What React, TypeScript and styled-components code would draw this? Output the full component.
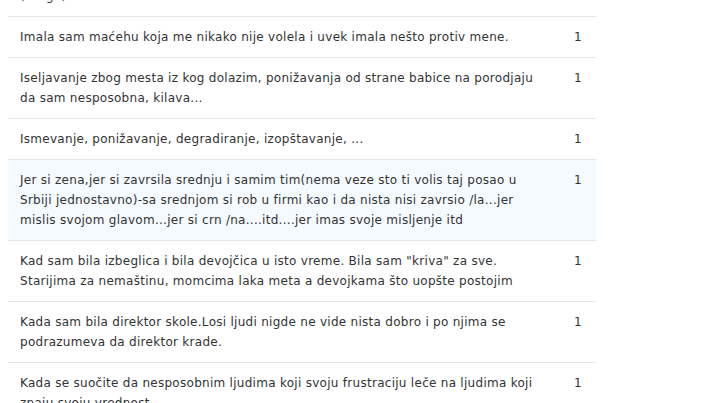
import React from "react";
import styled, { createGlobalStyle } from "styled-components";

const Global = createGlobalStyle`
  html, body { margin: 0; padding: 0; background: #ffffff; }
  body { padding: 0 8px; font-family: "DejaVu Sans", Verdana, sans-serif; overflow: hidden; }
`;

const Table = styled.table`
  width: 588px;
  margin-top: -24px;
  border-collapse: collapse;
  font-family: "DejaVu Sans", Verdana, sans-serif;
  font-size: 12px;
  letter-spacing: 0.28px;
  line-height: 20px;
  color: #333333;
`;

const Row = styled.tr<{ $hl?: boolean }>`
  background: ${(p) => (p.$hl ? "#f5fafe" : "#ffffff")};
  border-bottom: 1px solid #e6e6e1;
`;

const TextCell = styled.td`
  padding: 10px 16px 10px 12px;
  vertical-align: top;
  text-align: left;
`;

const CountCell = styled.td`
  width: 36px;
  padding: 10px 0;
  vertical-align: top;
  text-align: center;
`;

const rows: { text: string; count: number; hl?: boolean }[] = [
  { text: "(drugo)", count: 1 },
  { text: "Imala sam maćehu koja me nikako nije volela i uvek imala nešto protiv mene.", count: 1 },
  { text: "Iseljavanje zbog mesta iz kog dolazim, ponižavanja od strane babice na porodjaju da sam nesposobna, kilava...", count: 1 },
  { text: "Ismevanje, ponižavanje, degradiranje, izopštavanje, ...", count: 1 },
  {
    text: "Jer si zena,jer si zavrsila srednju i samim tim(nema veze sto ti volis taj posao u Srbiji jednostavno)-sa srednjom si rob u firmi kao i da nista nisi zavrsio /la...jer mislis svojom glavom...jer si crn /na....itd....jer imas svoje misljenje itd",
    count: 1,
    hl: true,
  },
  { text: "Kad sam bila izbeglica i bila devojčica u isto vreme. Bila sam \"kriva\" za sve. Starijima za nemaštinu, momcima laka meta a devojkama što uopšte postojim", count: 1 },
  { text: "Kada sam bila direktor skole.Losi ljudi nigde ne vide nista dobro i po njima se podrazumeva da direktor krade.", count: 1 },
  { text: "Kada se suočite da nesposobnim ljudima koji svoju frustraciju leče na ljudima koji znaju svoju vrednost.", count: 1 },
];

export default function App() {
  return (
    <>
      <Global />
      <Table>
        <tbody>
          {rows.map((r, i) => (
            <Row key={i} $hl={r.hl}>
              <TextCell>{r.text}</TextCell>
              <CountCell>{r.count}</CountCell>
            </Row>
          ))}
        </tbody>
      </Table>
    </>
  );
}
